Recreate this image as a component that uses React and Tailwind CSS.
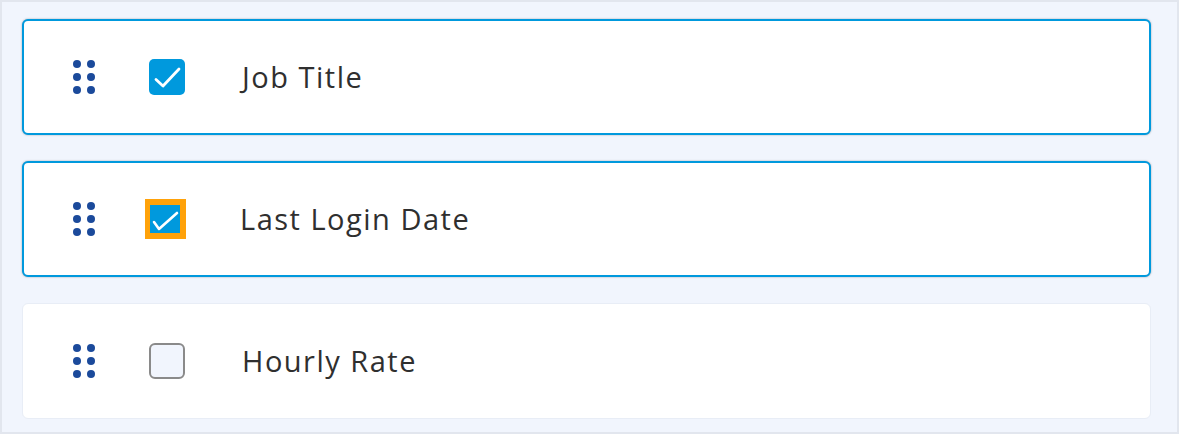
import React, { useState } from 'react';

const fields = [
  { id: 'jobTitle', label: 'Job Title', checked: true, focused: false },
  { id: 'lastLogin', label: 'Last Login Date', checked: true, focused: true },
  { id: 'hourlyRate', label: 'Hourly Rate', checked: false, focused: false },
];

const DragHandle = () => (
  <svg width="22" height="34" viewBox="0 0 22 34" className="shrink-0">
    {[4, 17, 30].map((cy) =>
      [4, 18].map((cx) => <circle key={`${cx}-${cy}`} cx={cx} cy={cy} r="4" fill="#1b4a9b" />)
    )}
  </svg>
);

const Checkbox = ({ checked, focused, onToggle }) => {
  if (focused) {
    return (
      <button onClick={onToggle} className="w-[41px] h-[40px] bg-[#ffa20a] flex items-center justify-center shrink-0">
        <span className="w-[30px] h-[28px] bg-[#0099dd] block">
          {checked && (
            <svg width="30" height="28" viewBox="0 0 30 28" fill="none">
              <path d="M4 17l5 7L27 8" stroke="white" strokeWidth="2.6" strokeLinecap="round" strokeLinejoin="round" />
            </svg>
          )}
        </span>
      </button>
    );
  }
  if (checked) {
    return (
      <button onClick={onToggle} className="w-[36px] h-[36px] rounded-[5px] bg-[#0099dd] shrink-0">
        <svg width="36" height="36" viewBox="0 0 36 36" fill="none">
          <path d="M7 20.5l7 6.5L30 10" stroke="white" strokeWidth="2.8" strokeLinecap="round" strokeLinejoin="round" />
        </svg>
      </button>
    );
  }
  return (
    <button onClick={onToggle} className="w-[36px] h-[36px] rounded-[6px] border-2 border-[#8a8a8a] bg-[#f1f5fd] shrink-0" />
  );
};

export default function App() {
  const [items, setItems] = useState(fields);

  const toggle = (id) => {
    setItems((prev) => prev.map((f) => (f.id === id ? { ...f, checked: !f.checked } : f)));
  };

  return (
    <div
      className="w-[1179px] h-[434px] border-2 border-[#e2e6ee] bg-[#f1f5fd] pl-5 pr-[26px] pt-[17px] flex flex-col gap-[26px]"
      style={{ fontFamily: '"Open Sans", Lato, sans-serif' }}
    >
      {items.map((f) => (
        <div
          key={f.id}
          className={
            'h-[116px] rounded-[6px] bg-white flex items-center ' +
            (f.checked
              ? 'border-2 border-[#0099dd] shadow-[0_0_2px_rgba(0,0,0,0.35)]'
              : 'border border-[#e8edf6]')
          }
        >
          <div className={f.checked ? 'pl-[49px]' : 'pl-[50px]'}>
            <DragHandle />
          </div>
          <div className={'flex items-center justify-center w-[42px] ' + (f.focused ? 'ml-[49px]' : 'ml-[51px]')}>
            <Checkbox checked={f.checked} focused={f.focused} onToggle={() => toggle(f.id)} />
          </div>
          <span className="ml-[54px] text-[29px] text-[#2f2f2f] tracking-[1.5px]">{f.label}</span>
        </div>
      ))}
    </div>
  );
}
